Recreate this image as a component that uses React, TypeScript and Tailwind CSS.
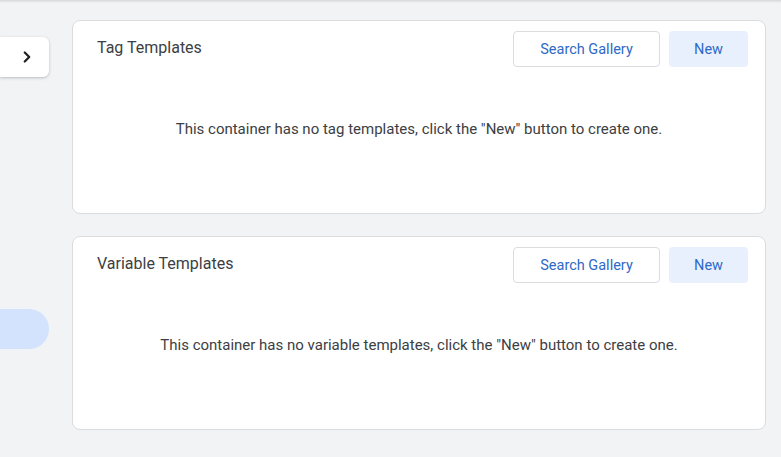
import { ChevronRight } from 'lucide-react';

function TemplateCard({ title, kind }: { title: string; kind: string }) {
  return (
    <div className="h-[194px] bg-white border border-[#dadce0] rounded-[8px] pt-[10px]">
      <div className="flex items-center h-[36px] pl-[24px] pr-[17px]">
        <h2 className="text-[16px] text-[#3c4043] flex-1 leading-none -mt-[2px]">{title}</h2>
        <button className="h-[36px] w-[147px] border border-[#dadce0] rounded-[4px] text-[14.5px] text-[#2f68c8] pt-[1px]">
          Search Gallery
        </button>
        <button className="ml-[9px] h-[36px] w-[79px] rounded-[4px] bg-[#e8f0fe] text-[14.5px] text-[#2f68c8] pt-[1px]">
          New
        </button>
      </div>
      <p className="mt-[52px] text-center text-[15px] leading-[20px] text-[#3c4043]">
        This container has no {kind} templates, click the "New" button to create one.
      </p>
    </div>
  );
}

export default function App() {
  return (
    <div
      className="relative w-[781px] h-[457px] bg-[#f1f3f4] overflow-hidden flex"
      style={{ fontFamily: 'Roboto, "Noto Sans", sans-serif' }}
    >
      <div className="absolute top-0 left-0 right-0 h-[3px] bg-gradient-to-b from-[#d5d7da] to-[#f1f3f4]" />
      <div className="w-[49px] shrink-0 flex flex-col">
        <div className="mt-[37px] h-[40px] bg-white rounded-r-[6px] shadow-[0_1px_3px_rgba(60,64,67,0.3)] flex items-center justify-end pr-[13px]">
          <ChevronRight size={18} strokeWidth={3} className="text-[#202124]" />
        </div>
        <div className="mt-[232px] h-[40px] bg-[#d3e3fd] rounded-r-full" />
      </div>
      <div className="ml-[23px] mr-[15px] flex-1 pt-[20px] flex flex-col gap-[22px]">
        <TemplateCard title="Tag Templates" kind="tag" />
        <TemplateCard title="Variable Templates" kind="variable" />
      </div>
    </div>
  );
}
